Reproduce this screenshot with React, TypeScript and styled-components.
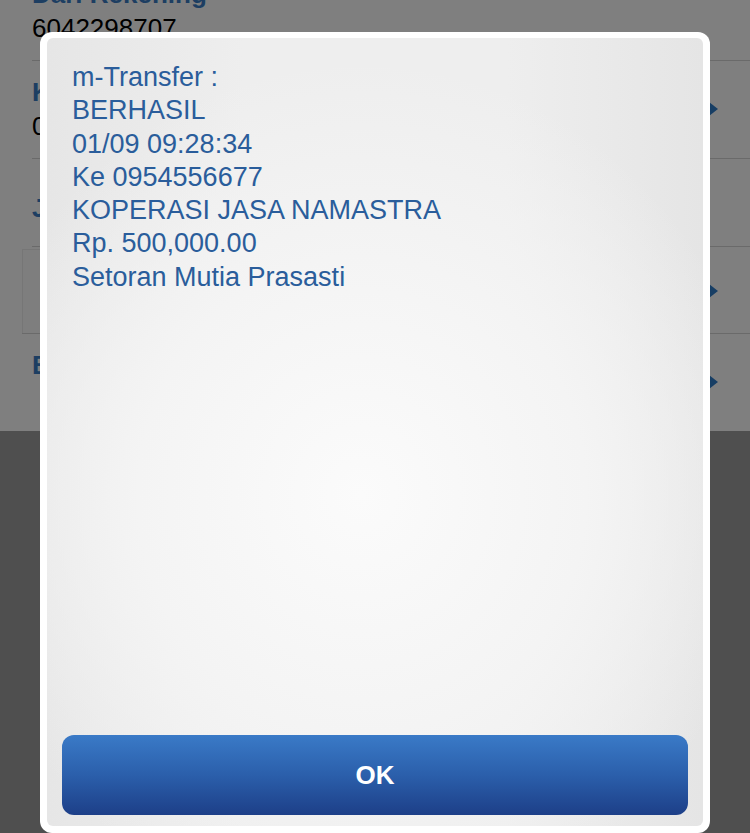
import styled, { createGlobalStyle } from 'styled-components';

const GlobalStyle = createGlobalStyle`
  html, body {
    margin: 0;
    height: 100%;
    overflow: hidden;
  }
  body {
    font-family: "Liberation Sans", Arial, sans-serif;
    background: #9e9e9e;
  }
  #root {
    height: 100%;
  }
`;

// page behind the dialog
const Page = styled.div`
  height: 100%;
  display: flex;
  flex-direction: column;
`;

const Form = styled.div`
  background: #ffffff;
  margin-top: -37px;
  display: flex;
  flex-direction: column;
`;

const Row = styled.div<{ $top?: number; $bottom?: number }>`
  display: flex;
  align-items: center;
  margin-left: 32px;
  padding: ${p => p.$top ?? 14}px 0 ${p => p.$bottom ?? 15}px;
  border-bottom: 1px solid #d4d4d4;
  &:last-child {
    border-bottom: none;
  }
`;

const BoxRow = styled.div`
  display: flex;
  align-items: center;
  height: 84px;
  margin: 2px 0 0 22px;
  border-bottom: 1px solid #d4d4d4;
`;

const InputBox = styled.div`
  flex: 1;
  align-self: stretch;
  background: #fdfdfd;
  border: 1px solid #ececec;
  border-bottom: none;
`;

const Fields = styled.div`
  flex: 1;
  display: flex;
  flex-direction: column;
`;

const Label = styled.div`
  font-size: 26px;
  line-height: 34px;
  font-weight: 700;
  color: #3a7cc4;
`;

const Value = styled.div`
  font-size: 26px;
  line-height: 34px;
  color: #000000;
  min-height: 34px;
`;

const Arrow = styled.div`
  width: 0;
  height: 0;
  margin: 0 32px 0 12px;
  border-top: 7px solid transparent;
  border-bottom: 7px solid transparent;
  border-left: 9px solid #2f7cc9;
`;

const Footer = styled.div`
  flex: 1;
  background: #9e9e9e;
`;

// dialog layer
const Overlay = styled.div`
  position: fixed;
  inset: 0;
  background: rgba(0, 0, 0, 0.5);
  display: flex;
  padding: 32px 40px 0;
`;

const Dialog = styled.div`
  flex: 1;
  display: flex;
  background: #ffffff;
  border-radius: 12px;
  padding: 6px 7px 7px;
`;

const Panel = styled.div`
  flex: 1;
  display: flex;
  flex-direction: column;
  border-radius: 6px;
  background:
    radial-gradient(ellipse 62% 55% at 48% 58%, #fbfbfb 0%, #f4f4f4 55%, rgba(234, 234, 234, 0) 100%),
    linear-gradient(90deg, #e6e6e6 0%, #eeeeee 30%, #eeeeee 70%, #e5e5e5 100%);
`;

const Message = styled.div`
  flex: 1;
  padding: 23px 25px;
  font-size: 27px;
  line-height: 33.3px;
  color: #2a5d9b;
`;

const OkButton = styled.button`
  margin: 0 15px 11px;
  height: 80px;
  border: none;
  border-radius: 12px;
  background: linear-gradient(180deg, #3a7ac7 0%, #2b5fab 50%, #1d3f88 100%);
  color: #ffffff;
  font-family: "Liberation Sans", Arial, sans-serif;
  font-size: 26px;
  font-weight: 700;
  cursor: pointer;
`;

const lines = [
  'm-Transfer :',
  'BERHASIL',
  '01/09 09:28:34',
  'Ke 0954556677',
  'KOPERASI JASA NAMASTRA',
  'Rp. 500,000.00',
  'Setoran Mutia Prasasti',
];

const App = () => (
  <>
    <GlobalStyle />
    <Page>
      <Form>
        <Row>
          <Fields>
            <Label>Dari Rekening</Label>
            <Value>6042298707</Value>
          </Fields>
        </Row>
        <Row>
          <Fields>
            <Label>Ke Rekening</Label>
            <Value>0954556677</Value>
          </Fields>
          <Arrow />
        </Row>
        <Row $top={32} $bottom={21}>
          <Fields>
            <Label>Jumlah</Label>
          </Fields>
        </Row>
        <BoxRow>
          <InputBox />
          <Arrow />
        </BoxRow>
        <Row>
          <Fields>
            <Label>Berita</Label>
            <Value />
          </Fields>
          <Arrow />
        </Row>
      </Form>
      <Footer />
    </Page>
    <Overlay>
      <Dialog>
        <Panel>
          <Message>
            {lines.map(line => (
              <div key={line}>{line}</div>
            ))}
          </Message>
          <OkButton type="button">OK</OkButton>
        </Panel>
      </Dialog>
    </Overlay>
  </>
);

export default App;
